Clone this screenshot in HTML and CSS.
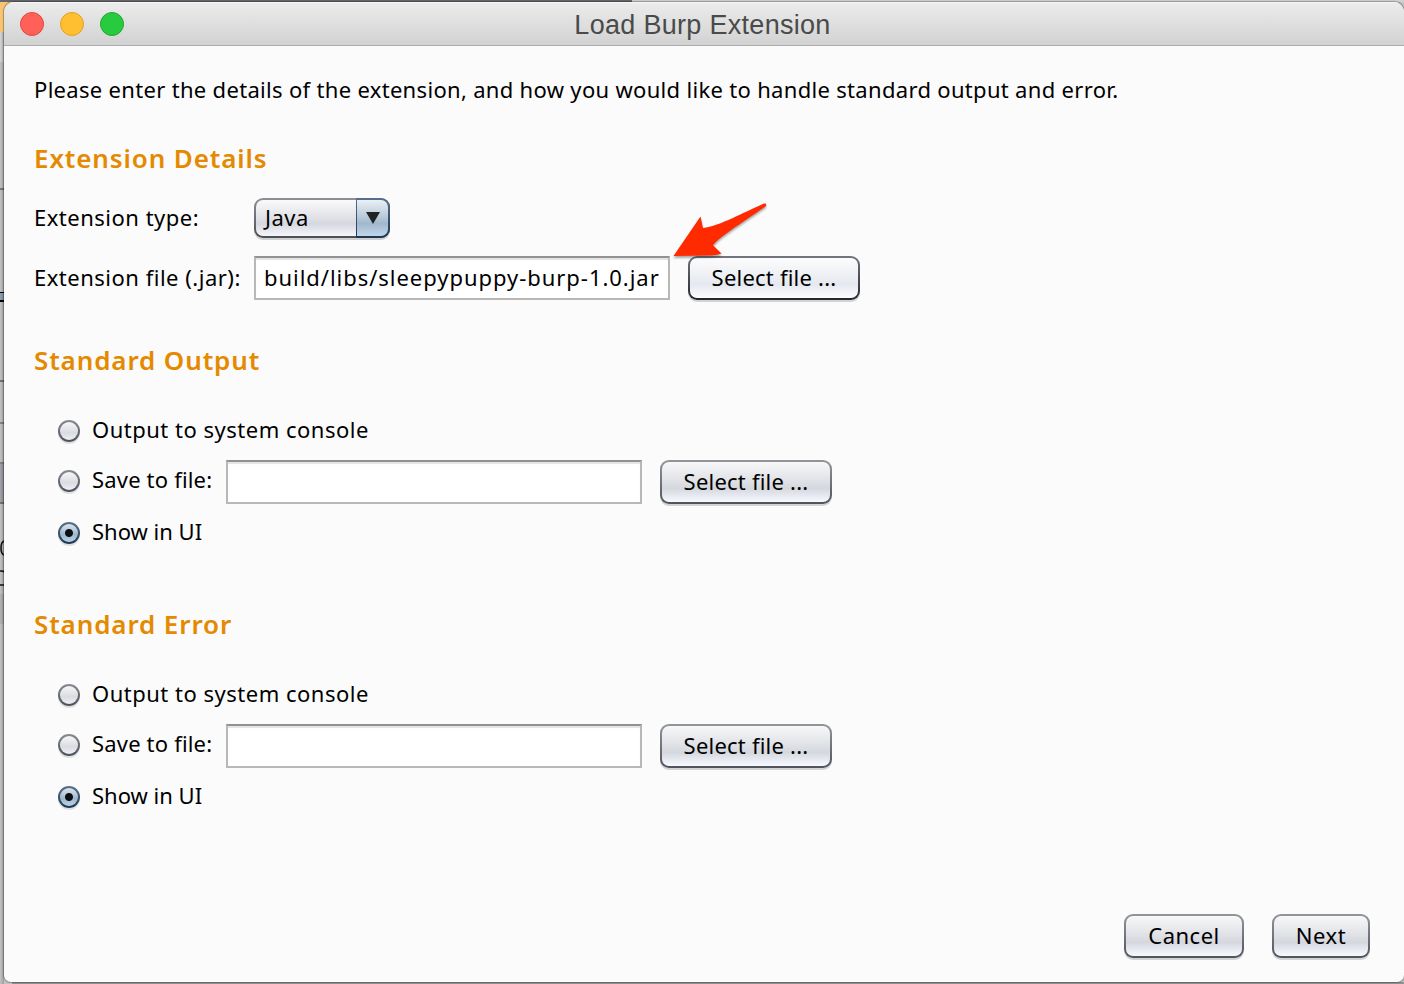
FILE: index.html
```
<!DOCTYPE html>
<html lang="en">
<head>
<meta charset="utf-8">
<title>Load Burp Extension</title>
<link rel="stylesheet" href="styles.css">
</head>
<body>
<svg class="backdrop" width="1404" height="984" aria-hidden="true">
  <defs><linearGradient id="shade"><stop offset="0" stop-color="#000" stop-opacity="0"/><stop offset="1" stop-color="#000" stop-opacity=".2"/></linearGradient></defs>
  <rect width="1404" height="984" fill="#c4c4c4"/>
  <rect width="632" height="2" fill="#65676c"/>
  <rect x="632" width="772" height="2" fill="#d2d2d2"/>
  <rect y="2" width="10" height="30" fill="#f7c574"/>
  <rect y="32" width="4" height="30" fill="#d6d6d6"/>
  <rect y="188" width="4" height="2" fill="#777b84"/>
  <rect y="292" width="4" height="10" fill="#000"/>
  <rect y="293" width="4" height="7" fill="#8fa2b5"/>
  <path d="M0 381h4M0 503h4" stroke="#777" stroke-width="2"/>
  <path d="M0 423h4M0 463h4" stroke="#85878c" stroke-width="2"/>
  <rect y="464" width="4" height="38" fill="#a2a4aa"/>
  <path d="M4 541Q1 542 1 548T4 555M0 571h2Q4 571 5 573M0 585h4" stroke="#111" stroke-width="1.6" fill="none"/>
  <rect y="594" width="4" height="30" fill="#b6b6b6"/>
  <rect y="32" width="4" height="952" fill="url(#shade)"/>
  <rect x="12" y="982" width="1392" height="2" fill="#929292"/>
</svg>
<main class="window">
  <header class="titlebar">
    <div class="lights"><i class="light close"></i><i class="light minimize"></i><i class="light zoom"></i></div>
    <h1 class="title">Load Burp Extension</h1>
  </header>
  <div class="content">
    <p class="intro">Please enter the details of the extension, and how you would like to handle standard output and error.</p>

    <section class="details">
      <h2 class="heading">Extension Details</h2>
      <div class="row type-row">
        <span class="label">Extension type:</span>
        <div class="combo"><span class="combo-value">Java</span><span class="combo-arrow"><svg width="16" height="14"><path d="M1 1h14L8 13z" fill="#222"/></svg></span></div>
      </div>
      <div class="row file-row">
        <span class="label">Extension file (.jar):</span>
        <div class="field"><span class="path">build/libs/sleepypuppy-burp-1.0.jar</span></div>
        <button class="button focused select">Select file ...</button>
        <svg class="arrow" width="100" height="60"><path d="M1.500 56L28.500 16.500L31 28C48 26 72 12 92 3.500Q95 3 94 6C76 19 48 36 41 45.300L49.500 53.500Q44 55.500 38 55.500Z" fill="#ff2a00"/></svg>
      </div>
    </section>

    <section class="stream">
      <h2 class="heading">Standard Output</h2>
      <div class="choice first"><i class="radio"></i><span class="c-console">Output to system console</span></div>
      <div class="choice save"><i class="radio"></i><span class="c-save">Save to file:</span><div class="field"></div><button class="button select">Select file ...</button></div>
      <div class="choice last"><i class="radio on"></i><span class="c-show">Show in UI</span></div>
    </section>

    <section class="stream">
      <h2 class="heading">Standard Error</h2>
      <div class="choice first"><i class="radio"></i><span class="c-console">Output to system console</span></div>
      <div class="choice save"><i class="radio"></i><span class="c-save">Save to file:</span><div class="field"></div><button class="button select">Select file ...</button></div>
      <div class="choice last"><i class="radio on"></i><span class="c-show">Show in UI</span></div>
    </section>

    <footer class="footer">
      <button class="button cancel">Cancel</button>
      <button class="button next">Next</button>
    </footer>
  </div>
</main>
</body>
</html>
```

FILE: styles.css
```
* { box-sizing: border-box; }
body {
  margin: 0;
  height: 984px;
  overflow: hidden;
  padding: 2px 0 2px 4px;
  font: 22px/30px "Noto Sans", "Open Sans", sans-serif;
  letter-spacing: .5px;
  color: #000;
  white-space: nowrap;
}
.backdrop { position: absolute; left: 0; top: 0; z-index: -1; }
.window {
  height: 980px;
  display: flex;
  flex-direction: column;
  background: #fbfbfb;
  border-radius: 10px 10px 7px 7px;
  overflow: hidden;
  box-shadow: 0 0 1px 1px rgba(0, 0, 0, .3);
}
.titlebar {
  height: 44px;
  flex: none;
  display: grid;
  grid-template-columns: 200px 1fr 203px;
  align-items: center;
  background: linear-gradient(#ececec, #d2d2d2);
  border-bottom: 1px solid #acacac;
  box-shadow: inset 0 1px #f6f6f6;
}
.lights { display: flex; gap: 16px; padding-left: 16px; }
.light { width: 24px; height: 24px; border-radius: 50%; border: 1px solid; }
.close { background: #ff6058; border-color: #e2463f; }
.minimize { background: #ffbf30; border-color: #dfa023; }
.zoom { background: #28cb40; border-color: #18ac29; }
.title {
  margin: 0;
  padding-top: 2px;
  text-align: center;
  font: 27px/30px "Liberation Sans", Arial, sans-serif;
  letter-spacing: .3px;
  color: #4a4a4a;
}
.content {
  flex: 1;
  display: flex;
  flex-direction: column;
  padding: 28px 34px 24px 30px;
}
.intro { margin: 0; height: 30px; letter-spacing: .315px; }
.heading {
  margin: 0;
  height: 36px;
  font-size: 26px;
  line-height: 36px;
  font-weight: 600;
  letter-spacing: .88px;
  color: #e58900;
}
.details { margin-top: 36px; height: 202px; }
.row { display: flex; align-items: center; position: relative; }
.row .label { width: 220px; padding-bottom: 2px; }
.type-row { margin-top: 22px; height: 40px; }
.file-row { margin-top: 18px; height: 44px; }
.combo {
  width: 136px;
  height: 40px;
  display: flex;
  border: 2px solid transparent;
  border-radius: 9px;
  background: linear-gradient(#fafafa, #dfe1e6 50%, #d5d8de 66%, #f4f6fc) padding-box, linear-gradient(#8e9096, #4c4e56) border-box;
  box-shadow: 0 2px 0 #d0d0d3;
}
.combo-value { flex: 1; padding-left: 9px; line-height: 35px; }
.combo-arrow {
  width: 34px;
  height: 40px;
  margin: -2px -2px 0 0;
  display: flex;
  justify-content: center;
  align-items: center;
  border: 2px solid transparent;
  border-left-width: 1px;
  border-radius: 0 9px 9px 0;
  background: linear-gradient(#eaf0f5, #b5c7d7 50%, #a0b7cc 65%, #bfd5ea) padding-box, linear-gradient(#55708b, #1d3650) border-box;
}
.field {
  width: 416px;
  height: 44px;
  padding: 4px 8px;
  background: #fff;
  border: 2px solid #b8b8b8;
  border-top-color: #929292;
  box-shadow: inset 0 2px 1px #e4e4e4;
}
.path { letter-spacing: .96px; }
.button {
  height: 44px;
  margin: 0;
  padding: 0 0 3px;
  font: inherit;
  letter-spacing: .5px;
  color: #000;
  text-align: center;
  border: 2px solid transparent;
  border-radius: 9px;
  background: linear-gradient(#f8f8f9, #dfe1e6 48%, #d4d7dd 66%, #f7f9ff) padding-box, linear-gradient(#92959a, #50535b) border-box;
  box-shadow: 0 2px 0 #d2d3d5;
}
.focused { background: linear-gradient(#fcfcfd, #eceef3 48%, #e5e8ef 66%, #fcfdff) padding-box, linear-gradient(#73767f, #23262f) border-box; }
.select { width: 172px; margin-left: 18px; letter-spacing: .22px; }
.arrow { position: absolute; left: 638px; top: -56px; filter: drop-shadow(0 2px 1px rgba(0, 0, 0, .35)); }
.stream { height: 264px; }
.choice { display: flex; align-items: center; padding-left: 24px; }
.choice span { padding-bottom: 2px; }
.radio {
  width: 22px;
  height: 22px;
  flex: none;
  margin: 2px 12px 0 0;
  border: 2px solid transparent;
  border-radius: 50%;
  background: linear-gradient(#f7f7f8, #dadce2 60%, #eef0f6) padding-box, linear-gradient(#888b91, #4c5058) border-box;
  box-shadow: 0 2px 0 #dedfe1;
}
.radio.on { background: radial-gradient(circle, #0c0f13 0 3.500px, transparent 4.500px) padding-box, linear-gradient(#dbe5ee, #9fb7cc 60%, #bcd2e7) padding-box, linear-gradient(#58728c, #1f3850) border-box; }
.first { margin-top: 32px; height: 40px; }
.save { margin-top: 10px; height: 44px; }
.save .radio { margin-top: -2px; }
.save .c-save { width: 134px; margin-top: -4px; letter-spacing: .18px; }
.c-show { letter-spacing: 0; }
.last { margin-top: 8px; height: 40px; }
.footer { margin-top: auto; display: flex; justify-content: flex-end; gap: 28px; }
.cancel { width: 120px; }
.next { width: 98px; }
```
